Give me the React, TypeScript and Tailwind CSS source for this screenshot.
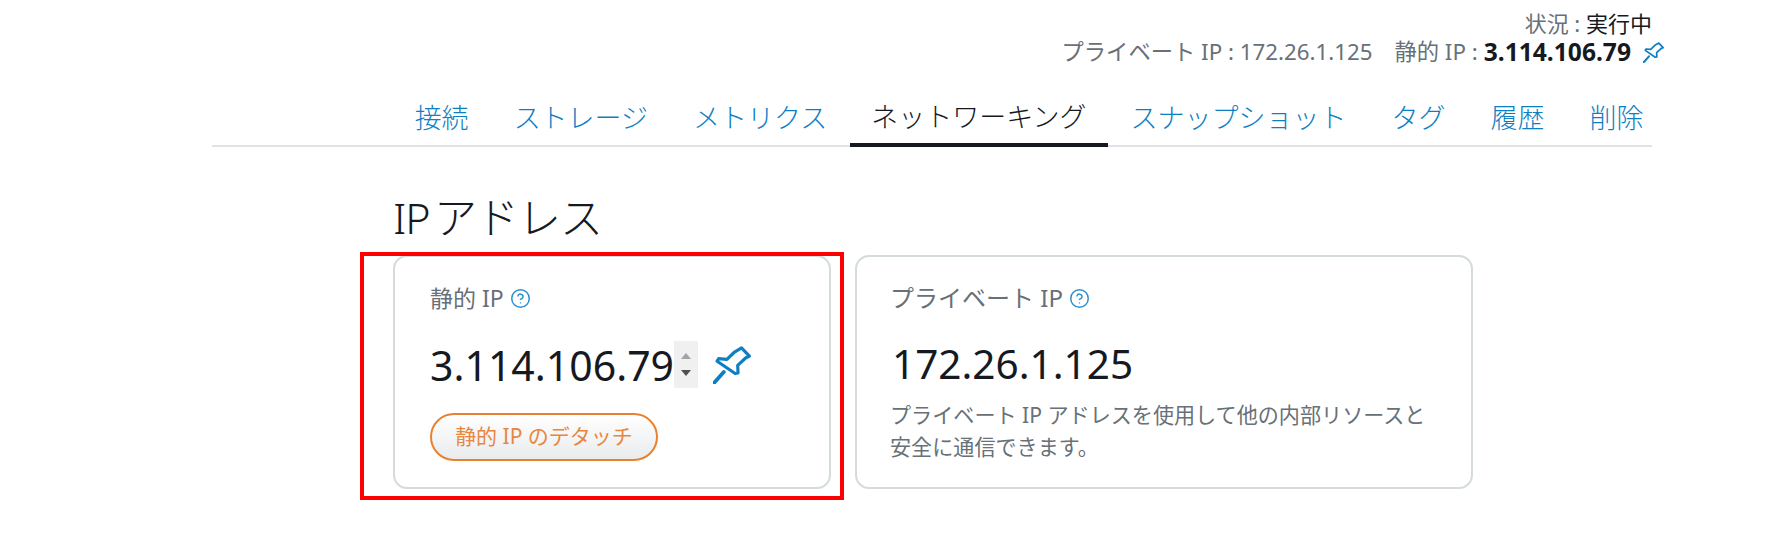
import { HelpCircle } from "lucide-react";

const jp = "font-['Noto_Sans','Noto_Sans_CJK_JP',sans-serif]";
const tabs = ["接続", "ストレージ", "メトリクス", "ネットワーキング", "スナップショット", "タグ", "履歴", "削除"];

function Pin({ className }: { className: string }) {
  return (
    <svg viewBox="0 0 24 24" fill="none" stroke="currentColor" strokeWidth="2" strokeLinejoin="round" strokeLinecap="round" className={className}>
      <path d="M18 1.2L23 6.4 20.6 7.6 15.6 12.2 15.8 17 14 17.4 2.6 9.6 3.6 8 8.8 8.4 13.6 3.8z" />
      <path d="M6.8 16.4L.6 23.4" strokeWidth="2.4" />
    </svg>
  );
}

function Help() {
  return <HelpCircle className="w-[21px] h-[21px] text-[#2b8fd0]" strokeWidth={1.7} />;
}

export default function App() {
  return (
    <div className={`${jp} relative w-[1767px] h-[544px] overflow-hidden bg-white text-[#16191f]`}>
      <div className="ml-[212px] w-[1440px]">
        <div className="pt-[8px] flex flex-col items-end h-[92px]">
          <div className="text-[22px] leading-[30px] text-[#687078]">
            状況 : <span className="text-[#16191f]">実行中</span>
          </div>
          <div className="flex items-center mt-[1px] text-[22.3px] leading-[26px] text-[#687078] -mr-[12px]">
            <span>プライベート IP : 172.26.1.125</span>
            <span className="ml-[22px]">静的 IP :</span>
            <span className="ml-[6px] text-[24.6px] font-bold text-[#16191f]">3.114.106.79</span>
            <Pin className="ml-[12px] w-[21px] h-[21px] text-[#0f7fc4]" />
          </div>
        </div>
        <div className="flex justify-end items-stretch h-[55px] border-b-2 border-[#dfe3e5]">
          <div className="flex items-stretch -mr-[14px]">
            {tabs.map((t) =>
              t === "ネットワーキング" ? (
                <div key={t} className="px-[21.5px] flex items-center text-[27px] font-light text-[#16191f] border-b-[4px] border-[#16191f] -mb-[2px]">{t}</div>
              ) : (
                <div key={t} className="px-[22.5px] flex items-center text-[27px] font-light text-[#0f7fc4]">{t}</div>
              )
            )}
          </div>
        </div>
        <div className="ml-[181px] pt-[40px]">
          <h1 className="text-[43px] leading-[62px] font-light text-[#16191f] tracking-[-1px] [word-spacing:-6px]">IP アドレス</h1>
          <div className="flex gap-[24px] mt-[6px]">
            <div className="w-[438px] h-[234px] rounded-[14px] border-2 border-[#d5dbdb] px-[35px] pt-[24px]">
              <div className="flex items-center gap-[6px] text-[23px] text-[#687078]">静的 IP <Help /></div>
              <div className="flex items-center mt-[23px]">
                <span className="text-[41px] leading-[52px] text-[#16191f]">3.114.106.79</span>
                <div className="w-[24px] h-[47px] bg-[#f0f0f0] flex flex-col items-center justify-center gap-[11px]">
                  <div className="w-0 h-0 border-x-[5px] border-x-transparent border-b-[6px] border-b-[#a3a3a3]" />
                  <div className="w-0 h-0 border-x-[5px] border-x-transparent border-t-[6px] border-t-[#505050]" />
                </div>
                <Pin className="ml-[15px] w-[38px] h-[38px] text-[#0f7fc4]" />
              </div>
              <button className="mt-[22px] h-[48px] w-[228px] rounded-full border-2 border-[#e8822f] bg-gradient-to-b from-white to-[#e9ebed] text-[21px] text-[#e8863f]">静的 IP のデタッチ</button>
            </div>
            <div className="w-[618px] h-[234px] rounded-[14px] border-2 border-[#d5dbdb] pl-[35px] pr-[33px] pt-[23px]">
              <div className="flex items-center gap-[6px] -ml-[2px] text-[24px] text-[#687078]">プライベート IP <Help /></div>
              <div className="mt-[22px] text-[40.5px] leading-[52px] text-[#16191f]">172.26.1.125</div>
              <p className="mt-[9px] -ml-[2px] w-[545px] text-[21.1px] leading-[32px] text-[#687078]">プライベート IP アドレスを使用して他の内部リソースと安全に通信できます。</p>
            </div>
          </div>
          <h2 className="mt-[45px] flex items-center gap-[8px] text-[33px] leading-[50px] font-light text-[#16191f]">IPv4 ファイアウォール <Help /></h2>
        </div>
      </div>
      <div className="absolute left-[360px] top-[252px] w-[484px] h-[248px] border-[4px] border-[#ff0000]" />
    </div>
  );
}
